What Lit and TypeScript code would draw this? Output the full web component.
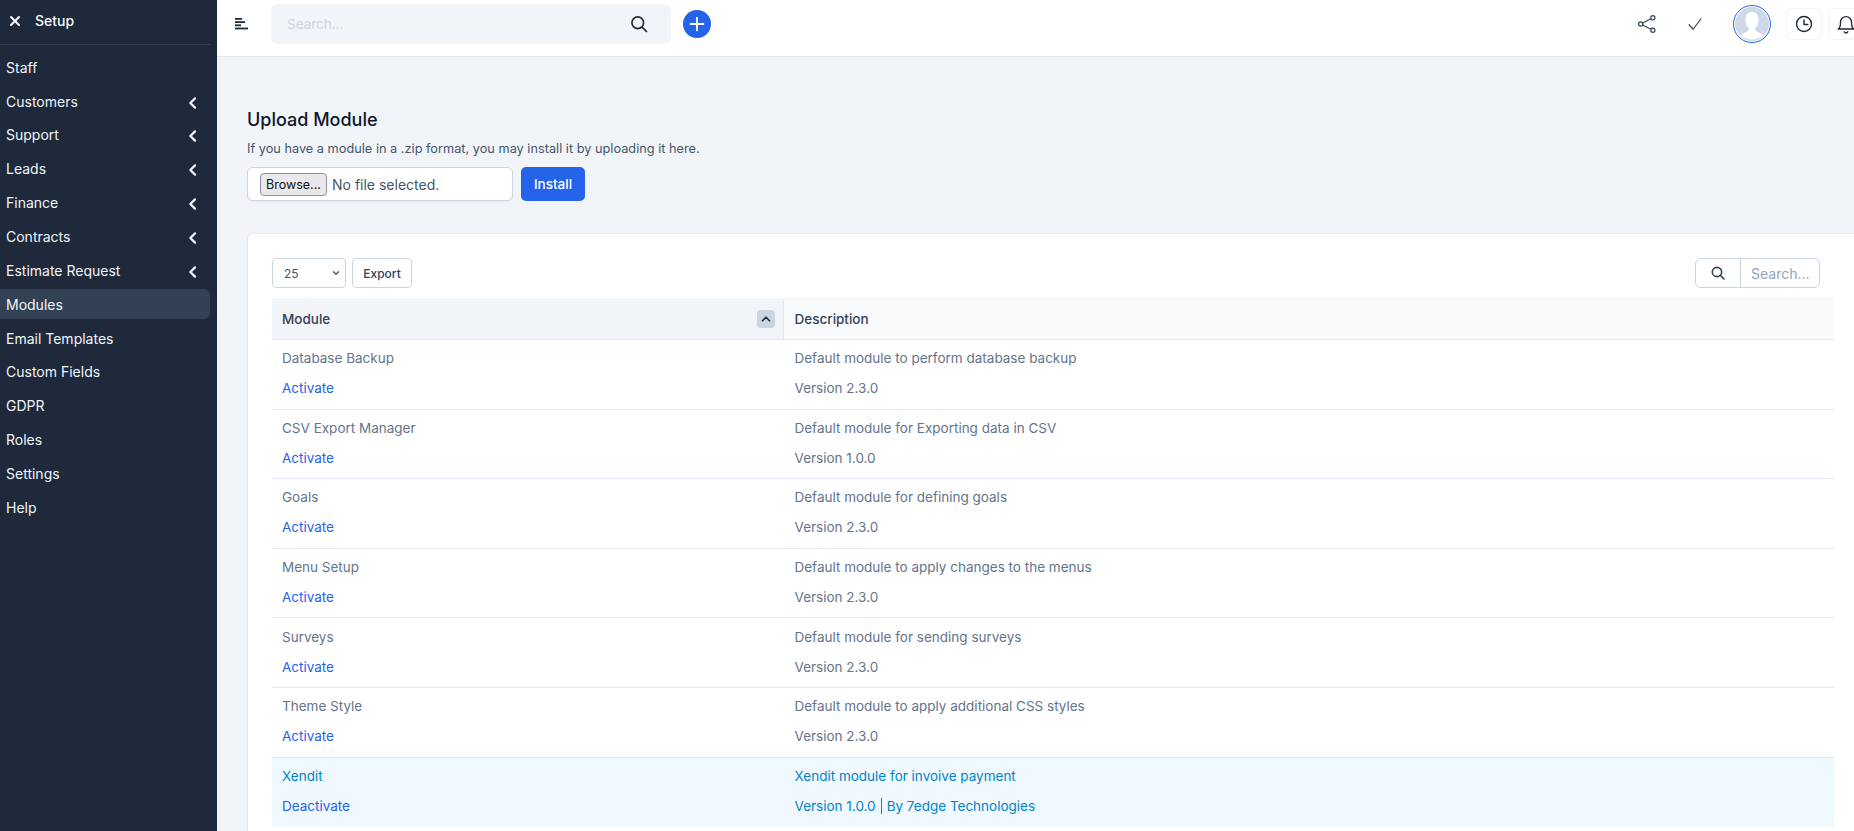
import { LitElement, html, css, svg } from 'lit';
import { customElement } from 'lit/decorators.js';

const navItems = [
  { label: 'Staff' },
  { label: 'Customers', sub: true },
  { label: 'Support', sub: true },
  { label: 'Leads', sub: true },
  { label: 'Finance', sub: true },
  { label: 'Contracts', sub: true },
  { label: 'Estimate Request', sub: true },
  { label: 'Modules', active: true },
  { label: 'Email Templates' },
  { label: 'Custom Fields' },
  { label: 'GDPR' },
  { label: 'Roles' },
  { label: 'Settings' },
  { label: 'Help' },
];

const modules = [
  { name: 'Database Backup', desc: 'Default module to perform database backup', version: 'Version 2.3.0' },
  { name: 'CSV Export Manager', desc: 'Default module for Exporting data in CSV', version: 'Version 1.0.0' },
  { name: 'Goals', desc: 'Default module for defining goals', version: 'Version 2.3.0' },
  { name: 'Menu Setup', desc: 'Default module to apply changes to the menus', version: 'Version 2.3.0' },
  { name: 'Surveys', desc: 'Default module for sending surveys', version: 'Version 2.3.0' },
  { name: 'Theme Style', desc: 'Default module to apply additional CSS styles', version: 'Version 2.3.0' },
];

// outline icon helper, 24x24 grid
const icon = (d: unknown, size = 20, sw = 1.5) => html`<svg width=${size} height=${size} viewBox="0 0 24 24" fill="none" stroke="currentColor" stroke-width=${sw} stroke-linecap="round" stroke-linejoin="round">${d}</svg>`;

const searchPath = svg`<circle cx="10.5" cy="10.5" r="7"/><path d="M15.7 15.7 21 21"/>`;

@customElement('app-root')
export class AppRoot extends LitElement {
  static styles = css`
    :host {
      display: flex;
      width: 1854px;
      height: 831px;
      overflow: hidden;
      font-family: Inter, 'Noto Sans', sans-serif;
      font-size: 13.5px;
      color: #64748b;
      background: #f1f5f9;
    }
    a { text-decoration: none; }

    /* sidebar */
    .sidebar {
      flex: 0 0 217px;
      background: #1e293b;
      color: #f1f5f9;
      font-size: 14px;
    }
    .side-head {
      height: 41px;
      margin-right: 7px;
      padding: 0 0 3px 7px;
      display: flex;
      align-items: center;
      gap: 12px;
      color: #f8fafc;
      font-weight: 500;
      border-bottom: 1px solid #334155;
    }
    .nav { padding-top: 7.2px; display: flex; flex-direction: column; gap: 3.87px; }
    .nav-item {
      height: 30px;
      margin-right: 7px;
      padding: 0 9px 0 6px;
      display: flex;
      align-items: center;
      justify-content: space-between;
      border-radius: 0 6px 6px 0;
    }
    .nav-item svg { margin-top: 3px; }
    .nav-item.active { background: #334155; }

    /* top bar */
    .main { flex: 1; min-width: 0; display: flex; flex-direction: column; }
    .topbar {
      flex: 0 0 57px;
      box-sizing: border-box;
      margin-right: -10px;
      padding-bottom: 8px;
      display: flex;
      align-items: center;
      background: #fff;
      border-bottom: 1px solid #e2e8f0;
      color: #1e293b;
    }
    .burger { margin-left: 18px; display: flex; color: #1e293b; }
    .top-search {
      width: 400px;
      height: 40px;
      margin-left: 22px;
      padding: 0 22px 0 16px;
      box-sizing: border-box;
      display: flex;
      align-items: center;
      justify-content: space-between;
      background: #f1f5f9;
      border-radius: 6px;
      color: #cbd5e1;
    }
    .top-search svg { color: #1e293b; }
    .plus {
      width: 28px;
      height: 28px;
      margin-left: 12px;
      border-radius: 50%;
      background: #2563eb;
      color: #fff;
      display: flex;
      align-items: center;
      justify-content: center;
    }
    .top-right { margin-left: auto; display: flex; align-items: center; }
    .share { display: flex; color: #334155; }
    .check { display: flex; margin-left: 29px; color: #334155; }
    .avatar {
      width: 38px;
      height: 38px;
      margin-left: 29px;
      box-sizing: border-box;
      border: 1px solid #2563eb;
      border-radius: 50%;
      overflow: hidden;
      display: flex;
      background: #fff;
      padding: 1px;
    }
    .icon-btn {
      width: 36px;
      height: 32px;
      margin-left: 6px;
      box-sizing: border-box;
      border: 1px solid #f1f5f9;
      border-radius: 6px;
      display: flex;
      align-items: center;
      justify-content: center;
      color: #1e293b;
    }
    .avatar + .icon-btn { margin-left: 15px; }

    /* content */
    .content { padding: 53px 0 0 30px; }
    h1 {
      margin: 0;
      font-size: 18px;
      line-height: 20px;
      font-weight: 500;
      color: #0f172a;
    }
    .hint { margin: 9px 0 0; font-size: 12.75px; line-height: 20px; color: #475569; }
    .upload { display: flex; gap: 8px; margin-top: 8px; }
    .file {
      width: 266px;
      height: 34px;
      box-sizing: border-box;
      padding-left: 12px;
      display: flex;
      align-items: center;
      gap: 5px;
      font-size: 14px;
      color: #475569;
      background: #fff;
      border: 1px solid #cbd5e1;
      border-radius: 6px;
      box-shadow: 0 1px 2px rgba(15, 23, 42, 0.06);
    }
    .browse {
      height: 23px;
      width: 67px;
      padding: 1px 0 0;
      background: #e9e9ed;
      border: 1px solid #8f8f9d;
      border-radius: 4px;
      font: 12.5px Inter, sans-serif;
      color: #111;
    }
    .install {
      width: 64px;
      height: 34px;
      border: 0;
      border-radius: 5px;
      background: #2563eb;
      color: #fff;
      font: 500 13.5px Inter, sans-serif;
    }

    .card {
      width: 1612px;
      box-sizing: border-box;
      margin-top: 32px;
      padding: 24px 24px 40px;
      background: #fff;
      border: 1px solid #e2e8f0;
      border-radius: 6px;
    }
    .toolbar { display: flex; align-items: center; gap: 6px; font-size: 12px; }
    .select {
      width: 74px;
      height: 30px;
      box-sizing: border-box;
      padding: 0 4px 0 11px;
      display: flex;
      align-items: center;
      justify-content: space-between;
      border: 1px solid #cbd5e1;
      border-radius: 4px;
      color: #475569;
    }
    .export {
      width: 60px;
      height: 30px;
      box-sizing: border-box;
      display: flex;
      align-items: center;
      justify-content: center;
      border: 1px solid #cbd5e1;
      border-radius: 4px;
      font-weight: 500;
      color: #334155;
    }
    .table-search {
      margin-left: auto;
      margin-right: 14px;
      width: 125px;
      height: 30px;
      box-sizing: border-box;
      display: flex;
      border: 1px solid #cbd5e1;
      border-radius: 6px;
      font-size: 14px;
      color: #94a3b8;
    }
    .ts-icon {
      flex: 0 0 45px;
      box-sizing: border-box;
      display: flex;
      align-items: center;
      justify-content: center;
      border-right: 1px solid #cbd5e1;
      color: #334155;
    }
    .ts-text { padding-left: 10px; align-self: center; }

    .table { margin-top: 10px; }
    .row {
      display: grid;
      grid-template-columns: 512px 1fr;
      border-bottom: 1px solid #e2e8f0;
    }
    .thead {
      height: 40px;
      box-sizing: content-box;
      border-top: 1px solid #f1f5f9;
      font-weight: 500;
      color: #334155;
    }
    .th { display: flex; align-items: center; padding: 0 10.5px; background: #f8fafc; }
    .th.first {
      justify-content: space-between;
      padding: 0 8px 0 10px;
      background: #f1f5f9;
      border-right: 1px solid #e2e8f0;
    }
    .sort {
      width: 18px;
      height: 18px;
      border-radius: 4px;
      background: #cbd5e1;
      color: #1e293b;
      display: flex;
      align-items: center;
      justify-content: center;
    }
    .cell {
      height: 68.6px;
      box-sizing: border-box;
      padding: 0 10.5px 1px;
      display: flex;
      flex-direction: column;
      justify-content: center;
      gap: 13px;
      line-height: 17px;
    }
    .cell:first-child { padding-left: 10px; }
    .row a { color: #2563eb; }
    .row.highlight { background: #f0f9ff; border-bottom-color: #f0f9ff; color: #0284c7; }
    .sep { border-left: 1px solid #0284c7; margin: 0 5px; }
  `;

  render() {
    return html`
      <aside class="sidebar">
        <div class="side-head">
          ${icon(svg`<path d="M6 6l12 12M18 6 6 18"/>`, 16, 3)}
          <span>Setup</span>
        </div>
        <nav class="nav">
          ${navItems.map(n => html`
            <div class="nav-item ${n.active ? 'active' : ''}">
              <span>${n.label}</span>
              ${n.sub ? icon(svg`<path d="M15 5l-7 7 7 7"/>`, 16, 3.4) : ''}
            </div>
          `)}
        </nav>
      </aside>
      <div class="main">
        <header class="topbar">
          <span class="burger">
            <svg width="14" height="14" viewBox="0 0 14 14" fill="currentColor">
              <rect x="0" y="1" width="7" height="1.8"/><rect x="0" y="4.2" width="10" height="1.8"/>
              <rect x="0" y="7.4" width="6" height="1.8"/><rect x="0" y="10.6" width="13" height="1.8"/>
            </svg>
          </span>
          <div class="top-search">
            <span>Search...</span>
            ${icon(searchPath, 20, 2)}
          </div>
          <div class="plus">${icon(svg`<path d="M12 5v14M5 12h14"/>`, 22, 2)}</div>
          <div class="top-right">
            <span class="share">
              ${icon(svg`<circle cx="19" cy="4.5" r="2.5"/><circle cx="4.5" cy="12" r="2.5"/><circle cx="19" cy="19.5" r="2.5"/><path d="M6.8 10.8 16.7 5.7M6.8 13.2l9.9 5.1"/>`, 20, 1.4)}
            </span>
            <span class="check">${icon(svg`<path d="M4 13l5.5 6L20 5"/>`, 18, 1.5)}</span>
            <div class="avatar">
              <svg width="34" height="34" viewBox="0 0 34 34">
                <circle cx="17" cy="17" r="17" fill="#cfd8e8"/>
                <path d="M17 5c-4 0-6.5 3-6.5 7.500 0 3.500 1.200 6.500 3 8.400v2.600c-1 1.400-5 2.600-8 4.500a17 17 0 0 0 23 0c-3-1.900-7-3.100-8-4.500v-2.600c1.800-1.900 3-4.900 3-8.400C23.500 8 21 5 17 5z" fill="#fff"/>
              </svg>
            </div>
            <span class="icon-btn">${icon(svg`<circle cx="12" cy="12" r="9"/><path d="M12 7v5.500h4.500"/>`, 20, 1.7)}</span>
            <span class="icon-btn">${icon(svg`<path d="M6 10a6 6 0 0 1 12 0c0 6 2.500 7.500 2.500 7.500h-17S6 16 6 10z"/><path d="M10 20.500a2.200 2.200 0 0 0 4 0"/>`, 22, 1.5)}</span>
          </div>
        </header>
        <div class="content">
          <h1>Upload Module</h1>
          <p class="hint">If you have a module in a .zip format, you may install it by uploading it here.</p>
          <div class="upload">
            <div class="file">
              <button class="browse">Browse...</button>
              <span>No file selected.</span>
            </div>
            <button class="install">Install</button>
          </div>
          <section class="card">
            <div class="toolbar">
              <div class="select">
                <span>25</span>
                ${icon(svg`<path d="M6 9l6 6 6-6"/>`, 10, 3)}
              </div>
              <div class="export">Export</div>
              <div class="table-search">
                <span class="ts-icon">${icon(searchPath, 16, 2.4)}</span>
                <span class="ts-text">Search...</span>
              </div>
            </div>
            <div class="table">
              <div class="row thead">
                <div class="th first">
                  <span>Module</span>
                  <span class="sort">${icon(svg`<path d="M6 15l6-6 6 6"/>`, 14, 3)}</span>
                </div>
                <div class="th">Description</div>
              </div>
              ${modules.map(m => html`
                <div class="row">
                  <div class="cell"><span>${m.name}</span><a href="#">Activate</a></div>
                  <div class="cell"><span>${m.desc}</span><span>${m.version}</span></div>
                </div>
              `)}
              <div class="row highlight">
                <div class="cell"><span>Xendit</span><a href="#">Deactivate</a></div>
                <div class="cell">
                  <span>Xendit module for invoive payment</span>
                  <span>Version 1.0.0<span class="sep"></span>By 7edge Technologies</span>
                </div>
              </div>
            </div>
          </section>
        </div>
      </div>
    `;
  }
}
